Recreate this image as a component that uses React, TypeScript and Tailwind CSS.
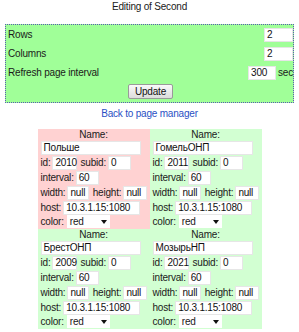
import React from "react";

type Cam = {
  name: string;
  id: string;
  bg: string;
};

const cams: Cam[] = [
  { name: "Польше", id: "2010", bg: "bg-[#ffd2d2]" },
  { name: "ГомельОНП", id: "2011", bg: "bg-[#d2ffd2]" },
  { name: "БрестОНП", id: "2009", bg: "bg-[#d2ffd2]" },
  { name: "МозырьНП", id: "2021", bg: "bg-[#d2ffd2]" },
];

function Field({ value, w }: { value: string; w: string }) {
  return (
    <div
      className={`${w} h-[14px] bg-white border border-[#e6e6e6] px-[2px] leading-[12px] text-[#111]`}
    >
      {value}
    </div>
  );
}

function ColorSelect() {
  return (
    <div className="w-[43px] h-[13px] bg-white flex items-center justify-between px-[3px] leading-[12px]">
      <span>red</span>
      <svg width="6" height="4" viewBox="0 0 6 4">
        <path d="M0 0h6L3 4z" fill="#111" />
      </svg>
    </div>
  );
}

function CamCard({ cam }: { cam: Cam }) {
  return (
    <div className={`${cam.bg} px-[3px] pb-[1px] flex flex-col`}>
      <div className="h-[12px] leading-[12px] text-center">Name:</div>
      <Field value={cam.name} w="w-[100px]" />
      <div className="h-[15px] flex items-center gap-[2px]">
        <span>id:</span>
        <Field value={cam.id} w="w-[25px]" />
        <span className="ml-[1px]">subid:</span>
        <Field value="0" w="w-[23px]" />
      </div>
      <div className="h-[15px] flex items-center gap-[2px]">
        <span>interval:</span>
        <Field value="60" w="w-[23px]" />
      </div>
      <div className="h-[15px] flex items-center gap-[2px]">
        <span>width:</span>
        <Field value="null" w="w-[23px]" />
        <span className="ml-[2px]">height:</span>
        <Field value="null" w="w-[25px]" />
      </div>
      <div className="h-[15px] flex items-center gap-[2px]">
        <span>host:</span>
        <Field value="10.3.1.15:1080" w="w-[77px]" />
      </div>
      <div className="h-[13px] flex items-center gap-[3px]">
        <span>color:</span>
        <ColorSelect />
      </div>
    </div>
  );
}

export default function App() {
  return (
    <div className="w-[299px] h-[332px] bg-white font-['Liberation_Sans',sans-serif] text-[10px] tracking-[-0.2px] text-[#1a1a1a]">
      <div className="pt-[1px] h-[14px] leading-[12px] text-center">Editing of Second</div>

      {/* page settings */}
      <div className="mt-[10px] mx-[5px] w-[289px] border border-dotted border-[#5a5ab4] bg-[#a0ff98] pl-[2px] pr-0 pt-[2px] pb-[3px] flex flex-col gap-[4px]">
        <div className="h-[15px] flex items-center justify-between">
          <span>Rows</span>
          <Field value="2" w="w-[29px]" />
        </div>
        <div className="h-[15px] flex items-center justify-between">
          <span>Columns</span>
          <Field value="2" w="w-[29px]" />
        </div>
        <div className="h-[15px] flex items-center">
          <span className="flex-1">Refresh page interval</span>
          <Field value="300" w="w-[28px]" />
          <span className="ml-[2px]">sec</span>
        </div>
        <div className="flex justify-center">
          <button className="h-[15px] w-[45px] border border-[#9a9a9a] rounded-[2px] bg-gradient-to-b from-[#fafafa] to-[#dcdcdc] leading-[12px] text-[#111]">
            Update
          </button>
        </div>
      </div>

      <div className="mt-[5px] h-[12px] leading-[12px] text-center">
        <a className="text-[#2a4fc4]">Back to page manager</a>
      </div>

      <div className="mt-[9px] mx-auto w-[224px] grid grid-cols-2">
        {cams.map((c) => (
          <CamCard key={c.id} cam={c} />
        ))}
      </div>
    </div>
  );
}
